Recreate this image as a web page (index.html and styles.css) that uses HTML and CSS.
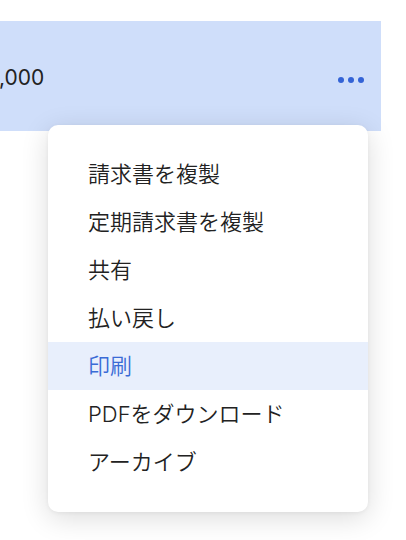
FILE: index.html
```html
<!DOCTYPE html>
<html lang="ja">
<head>
<meta charset="utf-8">
<link rel="stylesheet" href="styles.css">
</head>
<body>
<div class="row">
  <span class="amount">,000</span>
  <span class="more"><i></i><i></i><i></i></span>
</div>
<div class="menu">
  <div class="item">請求書を複製</div>
  <div class="item">定期請求書を複製</div>
  <div class="item">共有</div>
  <div class="item">払い戻し</div>
  <div class="item active">印刷</div>
  <div class="item">PDFをダウンロード</div>
  <div class="item">アーカイブ</div>
</div>
</body>
</html>
```
FILE: styles.css
```css
html, body {
  margin: 0;
  padding: 0;
  background: #fff;
}
body {
  width: 406px;
  height: 540px;
  position: relative;
  overflow: hidden;
  font-family: "Inter", "Noto Sans CJK JP", sans-serif;
  color: #222;
}
.row {
  margin-top: 21px;
  width: 381px;
  height: 110px;
  background: #cfdefa;
  display: flex;
  align-items: center;
  justify-content: space-between;
  padding: 0 17px 0 0;
  box-sizing: border-box;
}
.amount {
  font-size: 21px;
  font-weight: 400;
  color: #222;
  margin-left: -1px;
  margin-top: 2px;
}
.more {
  display: flex;
  gap: 4px;
  margin-top: 8px;
}
.more i {
  display: block;
  width: 6px;
  height: 6px;
  border-radius: 50%;
  background: #3463d6;
}
.menu {
  position: absolute;
  left: 48px;
  top: 125px;
  width: 320px;
  padding: 25px 0 26px;
  background: #fff;
  border-radius: 10px;
  box-shadow: 0 6px 28px rgba(0, 0, 0, 0.14), 0 1px 4px rgba(0, 0, 0, 0.05);
}
.item {
  height: 48px;
  line-height: 48px;
  padding-left: 40px;
  font-size: 22px;
  font-weight: 350;
  color: #222;
}
.item.active {
  background: #e8effc;
  color: #3a6bd6;
}
```
